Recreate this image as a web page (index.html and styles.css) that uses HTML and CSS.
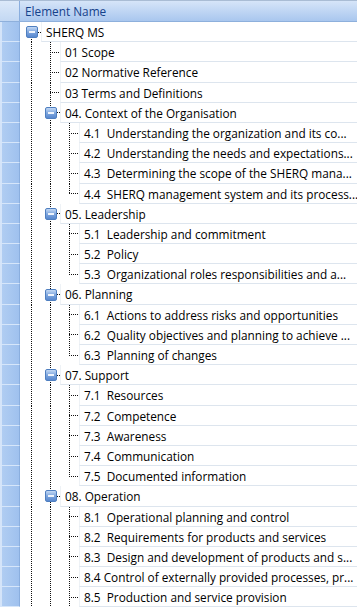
FILE: index.html
```html
<!DOCTYPE html>
<html lang="en">
<head>
  <meta charset="UTF-8">
  <meta name="viewport" content="width=device-width, initial-scale=1.0">
  <title>Element tree</title>
  <link rel="stylesheet" href="styles.css">
</head>
<body>
  <div class="treelist">
    <div class="head">
      <div class="gutter"></div>
      <div class="head-title">Element Name</div>
    </div>

    <div class="row"><div class="gutter"></div><div class="tree">
      <span class="ind exp first"><i class="btn"></i></span>
      <div class="cell">SHERQ MS</div></div></div>

    <div class="row"><div class="gutter"></div><div class="tree">
      <span class="ind line"></span><span class="ind tee"></span>
      <div class="cell">01 Scope</div></div></div>
    <div class="row"><div class="gutter"></div><div class="tree">
      <span class="ind line"></span><span class="ind tee"></span>
      <div class="cell">02 Normative Reference</div></div></div>
    <div class="row"><div class="gutter"></div><div class="tree">
      <span class="ind line"></span><span class="ind tee"></span>
      <div class="cell">03 Terms and Definitions</div></div></div>

    <div class="row"><div class="gutter"></div><div class="tree">
      <span class="ind line"></span><span class="ind exp"><i class="btn"></i></span>
      <div class="cell">04. Context of the Organisation</div></div></div>
    <div class="row"><div class="gutter"></div><div class="tree">
      <span class="ind line"></span><span class="ind line"></span><span class="ind tee"></span>
      <div class="cell">4.1  Understanding the organization and its co...</div></div></div>
    <div class="row"><div class="gutter"></div><div class="tree">
      <span class="ind line"></span><span class="ind line"></span><span class="ind tee"></span>
      <div class="cell">4.2  Understanding the needs and expectations...</div></div></div>
    <div class="row"><div class="gutter"></div><div class="tree">
      <span class="ind line"></span><span class="ind line"></span><span class="ind tee"></span>
      <div class="cell">4.3  Determining the scope of the SHERQ mana...</div></div></div>
    <div class="row"><div class="gutter"></div><div class="tree">
      <span class="ind line"></span><span class="ind line"></span><span class="ind elbow"></span>
      <div class="cell">4.4  SHERQ management system and its process...</div></div></div>

    <div class="row"><div class="gutter"></div><div class="tree">
      <span class="ind line"></span><span class="ind exp"><i class="btn"></i></span>
      <div class="cell">05. Leadership</div></div></div>
    <div class="row"><div class="gutter"></div><div class="tree">
      <span class="ind line"></span><span class="ind line"></span><span class="ind tee"></span>
      <div class="cell">5.1  Leadership and commitment</div></div></div>
    <div class="row"><div class="gutter"></div><div class="tree">
      <span class="ind line"></span><span class="ind line"></span><span class="ind tee"></span>
      <div class="cell">5.2  Policy</div></div></div>
    <div class="row"><div class="gutter"></div><div class="tree">
      <span class="ind line"></span><span class="ind line"></span><span class="ind elbow"></span>
      <div class="cell">5.3  Organizational roles responsibilities and a...</div></div></div>

    <div class="row"><div class="gutter"></div><div class="tree">
      <span class="ind line"></span><span class="ind exp"><i class="btn"></i></span>
      <div class="cell">06. Planning</div></div></div>
    <div class="row"><div class="gutter"></div><div class="tree">
      <span class="ind line"></span><span class="ind line"></span><span class="ind tee"></span>
      <div class="cell">6.1  Actions to address risks and opportunities</div></div></div>
    <div class="row"><div class="gutter"></div><div class="tree">
      <span class="ind line"></span><span class="ind line"></span><span class="ind tee"></span>
      <div class="cell">6.2  Quality objectives and planning to achieve ...</div></div></div>
    <div class="row"><div class="gutter"></div><div class="tree">
      <span class="ind line"></span><span class="ind line"></span><span class="ind elbow"></span>
      <div class="cell">6.3  Planning of changes</div></div></div>

    <div class="row"><div class="gutter"></div><div class="tree">
      <span class="ind line"></span><span class="ind exp"><i class="btn"></i></span>
      <div class="cell">07. Support</div></div></div>
    <div class="row"><div class="gutter"></div><div class="tree">
      <span class="ind line"></span><span class="ind line"></span><span class="ind tee"></span>
      <div class="cell">7.1  Resources</div></div></div>
    <div class="row"><div class="gutter"></div><div class="tree">
      <span class="ind line"></span><span class="ind line"></span><span class="ind tee"></span>
      <div class="cell">7.2  Competence</div></div></div>
    <div class="row"><div class="gutter"></div><div class="tree">
      <span class="ind line"></span><span class="ind line"></span><span class="ind tee"></span>
      <div class="cell">7.3  Awareness</div></div></div>
    <div class="row"><div class="gutter"></div><div class="tree">
      <span class="ind line"></span><span class="ind line"></span><span class="ind tee"></span>
      <div class="cell">7.4  Communication</div></div></div>
    <div class="row"><div class="gutter"></div><div class="tree">
      <span class="ind line"></span><span class="ind line"></span><span class="ind elbow"></span>
      <div class="cell">7.5  Documented information</div></div></div>

    <div class="row"><div class="gutter"></div><div class="tree">
      <span class="ind line"></span><span class="ind exp"><i class="btn"></i></span>
      <div class="cell">08. Operation</div></div></div>
    <div class="row"><div class="gutter"></div><div class="tree">
      <span class="ind line"></span><span class="ind line"></span><span class="ind tee"></span>
      <div class="cell">8.1  Operational planning and control</div></div></div>
    <div class="row"><div class="gutter"></div><div class="tree">
      <span class="ind line"></span><span class="ind line"></span><span class="ind tee"></span>
      <div class="cell">8.2  Requirements for products and services</div></div></div>
    <div class="row"><div class="gutter"></div><div class="tree">
      <span class="ind line"></span><span class="ind line"></span><span class="ind tee"></span>
      <div class="cell">8.3  Design and development of products and s...</div></div></div>
    <div class="row"><div class="gutter"></div><div class="tree">
      <span class="ind line"></span><span class="ind line"></span><span class="ind tee"></span>
      <div class="cell">8.4 Control of externally provided processes, pr...</div></div></div>
    <div class="row"><div class="gutter"></div><div class="tree">
      <span class="ind line"></span><span class="ind line"></span><span class="ind tee"></span>
      <div class="cell">8.5  Production and service provision</div></div></div>
  </div>
</body>
</html>
```

FILE: styles.css
```css
body {
  margin: 0;
  padding: 0;
  background: #fff;
  font-family: "Open Sans", "Noto Sans", sans-serif;
  font-size: 11.8px;
  color: #000;
}
.treelist {
  width: 357px;
  height: 608px;
  overflow: hidden;
}
.head {
  display: flex;
  height: 22px;
  box-sizing: border-box;
  border-top: 1px solid #a9bcd4;
  border-bottom: 1px solid #8eb0dc;
  background: linear-gradient(to bottom, #d6e5f8, #a9c7ee);
}
.head .gutter {
  background: linear-gradient(to bottom, #dce9f9, #c3d8f3);
  border-bottom: none;
}
.head-title {
  padding-left: 5px;
  line-height: 20px;
  color: #15428b;
}
.gutter {
  width: 20px;
  flex: none;
  box-sizing: border-box;
  border-right: 1px solid #8aaede;
  border-bottom: 1px solid #d6e6fa;
  background: linear-gradient(to right, #d4e4f9 0 2px, #b0cdf2 2px, #9fc1ee);
}
.row {
  display: flex;
  height: 20.2px;
}
.tree {
  display: flex;
  flex: 1;
  padding-left: 2px;
  min-width: 0;
}
.ind {
  width: 19px;
  flex: none;
  display: flex;
  align-items: center;
  justify-content: center;
}
.line {
  background: repeating-linear-gradient(to bottom, #111 0 1px, transparent 1px 2px) 9px 0 / 1px 100% no-repeat;
}
.tee {
  background:
    repeating-linear-gradient(to bottom, #111 0 1px, transparent 1px 2px) 9px 0 / 1px 100% no-repeat,
    repeating-linear-gradient(to right, #111 0 1px, transparent 1px 2px) 9px 50% / 9px 1px no-repeat;
}
.elbow {
  background:
    repeating-linear-gradient(to bottom, #111 0 1px, transparent 1px 2px) 9px 0 / 1px 50% no-repeat,
    repeating-linear-gradient(to right, #111 0 1px, transparent 1px 2px) 9px 50% / 9px 1px no-repeat;
}
.exp {
  background:
    repeating-linear-gradient(to bottom, #111 0 1px, transparent 1px 2px) 9px 0 / 1px 5px no-repeat,
    repeating-linear-gradient(to bottom, #111 0 1px, transparent 1px 2px) 9px 100% / 1px 5px no-repeat,
    repeating-linear-gradient(to right, #111 0 1px, transparent 1px 2px) 16px 50% / 3px 1px no-repeat;
}
.exp.first {
  background:
    repeating-linear-gradient(to bottom, #111 0 1px, transparent 1px 2px) 9px 100% / 1px 5px no-repeat,
    repeating-linear-gradient(to right, #111 0 1px, transparent 1px 2px) 16px 50% / 3px 1px no-repeat;
}
.btn {
  width: 12px;
  height: 12px;
  box-sizing: border-box;
  border: 1px solid #4f7fc0;
  border-radius: 2px;
  background: linear-gradient(to bottom, #c3d9f5, #7ea6de 50%, #5888cf);
  display: flex;
  align-items: center;
  justify-content: center;
}
.btn::before {
  content: "";
  width: 6px;
  height: 2px;
  background: #eef4fc;
}
.cell {
  flex: 1;
  min-width: 0;
  box-sizing: border-box;
  border-bottom: 1px solid #dde5ee;
  border-left: 1px solid #eef2f6;
  padding-left: 4px;
  line-height: 20px;
  white-space: pre;
  overflow: hidden;
}
```
